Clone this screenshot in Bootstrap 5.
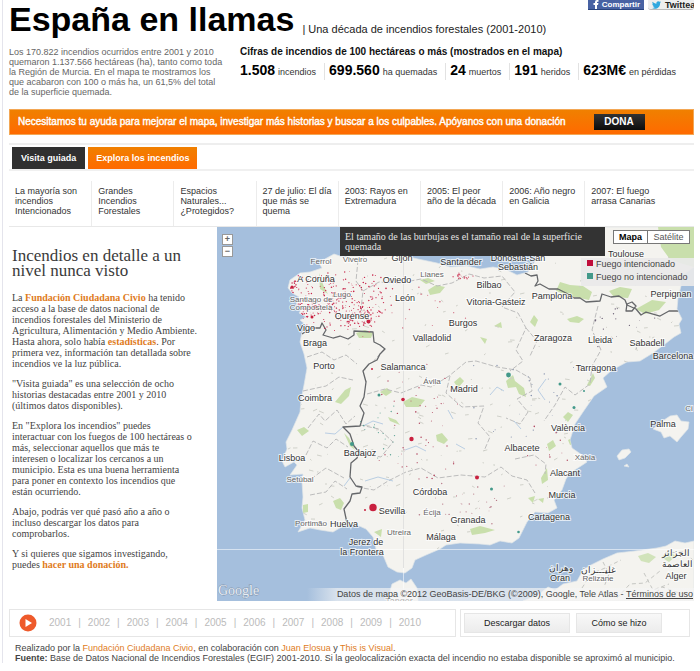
<!DOCTYPE html>
<html lang="es">
<head>
<meta charset="utf-8">
<meta name="viewport" content="width=device-width, initial-scale=1">
<title>España en llamas</title>
<link href="https://cdn.jsdelivr.net/npm/bootstrap@5.3.0/dist/css/bootstrap.min.css" rel="stylesheet">
<style>
body{font-family:"Liberation Sans",Arial,sans-serif;font-size:10px;line-height:10px;color:#444;background:#fff}
a{text-decoration:none;color:#e07b1c}
.page{margin-left:2px;padding:0 6px;border-left:1px solid #e4e4ec}
.site-title{font-size:34px;line-height:38px;font-weight:700;color:#000;margin:0}
.tagline{font-size:11px;line-height:12px;color:#222;padding-bottom:1px}
.masthead{height:40px}
.share{height:10px;overflow:hidden}
.share button{border:0;padding:0 4px;height:10px;font-size:9px;line-height:10px;white-space:nowrap;overflow:hidden}
.share .fb{background:#4862a3;color:#fff;width:56px;font-size:8px;font-weight:700;border-bottom:1px solid #29447e}
.share .tw{background:#eee;color:#222;width:46px;font-weight:700;border-bottom:1px solid #bbb;border-radius:0 0 3px 3px}
.intro{width:231px;color:#666;font-size:9px;padding-top:7px}
.figures h2{font-size:10px;line-height:12px;font-weight:700;color:#111;margin:6px 0 5px}
.figures li{font-size:9px;line-height:15px;padding:0 4px 0 4px;border-left:1px solid #e2e2e2;white-space:nowrap;color:#333}
.figures li:first-child{border:0;padding-left:0}
.figures b{font-size:14px;color:#000;margin-right:3px}
.intro-row{min-height:69px}
.appeal{background:linear-gradient(#f08000,#ff6a00);border:1px solid #f3a755;height:26px;color:#fff;padding-left:8px;gap:28px}
.appeal span{-webkit-text-stroke:.4px #fff}
.appeal a{background:linear-gradient(#333,#0c0c0c);color:#fff;font-weight:700;width:51px;height:16px;line-height:16px;text-align:center}
.tabs{margin-top:8px;border-top:2px solid #eee;border-bottom:2px solid #f0f0f0;padding:2px 0 0 3px;gap:3px}
.tabs button{border:0;height:22px;padding:0 8px;color:#fff;font-size:9px;font-weight:700;background:linear-gradient(#f08000,#ff6a00)}
.tabs .on{background:#303030;padding:0 9px}
.stories{padding-top:10px;border-bottom:1px solid #e8e8e8}
.stories a{flex:0 0 12%;min-width:0;height:45px;padding:5px 0 0 6px;border-left:1px solid #ececec;color:#333;font-size:9px;white-space:nowrap}
.stories a:first-child{border:0}
.stories a:last-child{flex-grow:1}
.story{width:208px;padding:21px 18px 0 3px;font-family:"Liberation Serif",Georgia,serif;font-size:10px;line-height:11px;color:#444}
.story h1{font-size:17px;line-height:15px;margin:0 0 14px;color:#3a3a3a;white-space:nowrap}
.story p{margin:0 0 9px;white-space:nowrap}
.story a{font-weight:700}
.map-panel{min-width:0}
.zoomer{left:5px;top:7px;width:11px}
.zoomer button{display:block;width:11px;height:11px;margin-bottom:1px;padding:0;border:1px solid #999;background:#fff;color:#666;font:700 9px/9px "Liberation Sans",sans-serif}
.hint{left:123px;top:0;width:265px;height:29px;padding:5px;background:#333;color:#e4e4e4;font:10px/10px "Liberation Serif",serif;white-space:nowrap}
.maptype{right:4px;top:3px;border:1px solid #777;background:#fff}
.maptype button{border:0;background:#fff;font-size:9px;line-height:12px;padding:0;width:41px;color:#555}
.maptype button:first-child{width:34px;font-weight:700;color:#000;border-right:1px solid #777}
.legend{right:0;top:31px;width:113px;height:28px;padding:0 0 0 6px;background:rgba(233,233,233,.92);line-height:13px;font-size:9px;white-space:nowrap}
.legend i{display:inline-block;width:6px;height:6px;margin-right:3px;vertical-align:1px}
.legend .arson{background:#c00d3b}
.legend .natural{background:#43998a}
.credit{right:0;bottom:0;height:13px;padding:0 1px 0 30px;background:linear-gradient(90deg,rgba(245,245,245,0),rgba(245,245,245,.65) 30px);font-size:9px;line-height:13px;color:#444;white-space:nowrap}
.credit a{color:#444;text-decoration:underline}
.bottom{margin-top:8px;gap:4px}
.panel{border:1px solid #e6e6e6;height:28px}
.years{gap:7px;padding-left:9px;flex:1;color:#bbb}
.years a{color:#bbb}
.play{border:0;background:none;padding:0;width:18px;height:18px;margin-right:5px}
.play svg{display:block}
.acts{width:230px;padding:0 3px;gap:6px}
.acts button{border:1px solid #e6e6e6;background:linear-gradient(#f8f8f8,#ececec);color:#222;font-size:9px;height:20px;width:86px;padding:0}
.acts button:first-child{width:106px}
.foot{padding:6px 0 0 6px;font-size:9px;white-space:nowrap}
.place{font-family:"Liberation Sans",Arial,sans-serif;font-size:9px;text-anchor:middle;fill:#333;stroke:#fff;stroke-width:2px;stroke-opacity:.7;paint-order:stroke}
.minor{font-size:8px;fill:#666}
</style>
<script src="https://cdn.jsdelivr.net/npm/bootstrap@5.3.0/dist/js/bootstrap.bundle.min.js"></script>
</head>
<body>
<div class="page">
<header>
  <div class="masthead d-flex">
    <div class="d-flex align-items-end flex-grow-1"><div class="site-title align-self-start">España en llamas</div><div class="tagline ms-2 mb-1">| Una década de incendios forestales (2001-2010)</div></div>
    <div class="share d-flex gap-1">
      <button class="fb d-flex align-items-center justify-content-between"><svg width="8" height="9" viewBox="0 0 8 9" aria-hidden="true"><path d="M3 9V5H1.500V3H3V2Q3 0 5 0H6.500V1.700H5.500Q5 1.700 5 2.300V3H6.500L6 5H5V9Z" fill="#fff"/></svg>Compartir</button>
      <button class="tw d-flex align-items-center gap-1"><svg class="flex-shrink-0" width="9" height="8" viewBox="0 0 24 20" aria-hidden="true"><path d="M24 2.400 21.500 5C22 14 15 20 7.500 20 4.800 20 2.200 19.200 0 17.800 2.600 18 5.200 17.400 7.200 15.700 5 15.600 3.200 14.200 2.600 12.300H4.800C2.500 11.800.9 9.800.9 7.400L3.100 8C1 6.500.3 3.700 1.600 1.400 4.100 4.400 7.700 6.300 11.800 6.500 10.900 2.800 13.700 0 16.600 0 18 0 19.300.6 20.200 1.500L23.300.3 21.200 3Z" fill="#31a8df"/></svg>Twittear</button>
    </div>
  </div>
  <div class="intro-row d-flex">
    <div class="intro">Los 170.822 incendios ocurridos entre 2001 y 2010<br>quemaron 1.137.566 hectáreas (ha), tanto como toda<br>la Región de Murcia. En el mapa te mostramos los<br>que acabaron con 100 o más ha, un 61,5% del total<br>de la superficie quemada.</div>
    <div class="figures">
      <h2>Cifras de incendios de 100 hectáreas o más (mostrados en el mapa)</h2>
      <ul class="list-unstyled d-flex mb-0 gap-1"><li><b>1.508</b>incendios</li><li><b>699.560</b>ha quemadas</li><li><b>24</b>muertos</li><li><b>191</b>heridos</li><li><b>623M€</b>en pérdidas</li></ul>
    </div>
  </div>
</header>
<div class="appeal d-flex align-items-center"><span>Necesitamos tu ayuda para mejorar el mapa, investigar más historias y buscar a los culpables. Apóyanos con una donación</span><a href="#">DONA</a></div>
<div class="tabs d-flex"><button class="on">Visita guiada</button><button>Explora los incendios</button></div>
<nav class="stories d-flex">
  <a href="#">La mayoría son<br>incendios<br>Intencionados</a><a href="#">Grandes<br>Incendios<br>Forestales</a><a href="#">Espacios<br>Naturales...<br>¿Protegidos?</a><a href="#">27 de julio: El día<br>que más se<br>quema</a><a href="#">2003: Rayos en<br>Extremadura</a><a href="#">2005: El peor<br>año de la década</a><a href="#">2006: Año negro<br>en Galicia</a><a href="#">2007: El fuego<br>arrasa Canarias</a>
</nav>
<main class="d-flex">
  <article class="story flex-shrink-0">
    <h1>Incendios en detalle a un<br>nivel nunca visto</h1>
    <p>La <a href="#">Fundación Ciudadana Civio</a> ha tenido<br>acceso a la base de datos nacional de<br>incendios forestales del Ministerio de<br>Agricultura, Alimentación y Medio Ambiente.<br>Hasta ahora, solo había <a href="#">estadísticas</a>. Por<br>primera vez, información tan detallada sobre<br>incendios ve la luz pública.</p>
    <p>"Visita guiada" es una selección de ocho<br>historias destacadas entre 2001 y 2010<br>(últimos datos disponibles).</p>
    <p>En "Explora los incendios" puedes<br>interactuar con los fuegos de 100 hectáreas o<br>más, seleccionar aquellos que más te<br>interesen o localizar los cercanos a un<br>municipio. Esta es una buena herramienta<br>para poner en contexto los incendios que<br>están ocurriendo.</p>
    <p>Abajo, podrás ver qué pasó año a año o<br>incluso descargar los datos para<br>comprobarlos.</p>
    <p>Y si quieres que sigamos investigando,<br>puedes <a href="#">hacer una donación.</a></p>
  </article>
  <section class="map-panel position-relative flex-grow-1">
    <svg id="map" class="d-block w-100" viewBox="217 227 477 374" role="img" aria-label="Mapa de incendios">
      <defs><clipPath id="land-clip"><path id="iberia" d="M537 227V258L528 272 517 275 507 270 493 267 480 269 467 266 450 267 437 263 418 259 405 256 390 255 375 256 360 254 343 257 334 254 325 259 319 263 322 268 310 272 300 273 290 280 288 288 292 293 299 297 296 305 303 307 299 313 306 317 300 320 307 326 302 332 300 342 304 354 307 368 304 385 301 400 300 412 292 430 286 442 287 449 282 461 285 467 294 462 297 465 290 475 303 474 302 482 303 497 302 508 305 520 298 532 310 528 320 530 333 532 345 525 357 525 366 529 373 537 376 549 383 555 388 567 397 572 405 573 412 568 415 560 426 555 440 549 446 545 460 543 480 544 490 545 500 541 512 543 519 538 527 522 535 512 548 513 557 508 554 500 562 490 566 479 570 473 581 466 587 462 582 455 572 448 570 440 575 424 583 412 594 396 607 387 603 378 612 370 627 362 640 361 653 353 665 344 674 337 681 333 679 324 682 319 677 309 678 298 681 286 680 277 694 267V227Z"/></clipPath></defs>
      <rect x="217" y="227" width="477" height="374" fill="#a5bfdd"/>
      <g fill="#f4f3ef" stroke="#dfe5e8" stroke-width=".7">
        <use href="#iberia"/>
        <path d="M387 601 392 584 400 580 406 583 411 579 417 588 418 601ZM523 601 538 595 548 587 555 590 563 584 577 581 583 570 591 565 603 559 617 553 635 551 657 548 666 546 675 541 685 543 694 541V601Z"/>
        <path d="M653 429 661 422 670 416 677 415 681 421 689 422 688 429 681 437 677 442 670 436 664 438 661 432ZM617 456 622 450 629 449 631 452 625 458 619 460ZM624 466 627 464 629 467Z"/>
      </g>
      <g clip-path="url(#land-clip)">
        <g fill="#c9dfac">
          <path d="M356 333 365 330 373 333 371 338 359 338ZM335 402 345 390 351 387 349 396 341 404ZM428 290 436 285 445 287 440 293 430 295ZM403 402 412 397 425 400 419 407 406 407ZM380 392 387 388 392 392 386 396ZM506 381 513 375 515 381 524 388 526 397 519 394 516 387 508 388ZM556 291 560 282 570 285 583 286 592 292 589 300 570 296ZM609 291 620 287 632 289 628 298 614 297ZM636 309 652 300 666 302 659 310 645 314ZM658 227H694V267L680 263 669 258 661 247ZM567 319 577 316 584 319 579 323 570 322ZM530 322 534 315 538 320 535 327ZM333 501 340 498 344 503 341 510 336 508ZM297 430 304 427 309 431 302 436ZM344 433 349 438 355 450 350 446ZM303 505 308 504 308 512 303 513ZM547 444 553 440 556 446 549 451ZM541 478 547 468 548 480 542 484ZM528 498 535 496 533 503ZM538 499 544 498 543 503ZM470 529 480 526 495 530 485 533 472 535ZM374 532 382 529 381 537ZM436 435 442 433 448 440 444 444 437 441ZM563 417 568 412 573 415 568 422ZM587 385 593 373 595 378 590 386ZM454 382 460 377 464 381 458 388ZM494 326 501 322 502 328ZM568 440 572 438 575 443 570 445ZM388 417 396 420 400 425 390 421ZM577 227H587V244H570ZM420 280 428 278 435 281 426 284ZM480 337 487 339 485 344ZM319 273 324 287 328 294 320 289Z"/>
        </g>
        <g id="relief" fill="none" stroke="#cccdc5" stroke-width=".9"></g>
        <g fill="none" stroke="#bcbcbc" stroke-width="1" stroke-dasharray="5 2">
          <path d="M358 260 356 281 363 291 361 309 370 326M363 291 379 282 400 283 421 279 437 286 452 283 469 274 484 278 502 276 515 292 502 307 518 313 526 328 516 350 523 361 510 371M385 348 372 363M367 394 385 389 401 393 421 385 431 387 449 376 466 362 476 361 497 367 516 370 530 378 532 391 517 399 528 412 520 424 506 418M450 376 446 393 462 407 484 406 478 423 490 437 484 451M360 425 379 429 393 442 381 457 361 454M357 487 374 490 388 481 406 472 421 468 438 478 461 475 485 477 501 467 512 476 527 480 535 493M515 459 534 455 546 464 545 474M598 306 592 330 601 350 592 366 590 384 575 395 565 387 555 405 544 421M526 328 537 341 530 356M307 357 322 352 334 360 346 355 357 364M303 391 326 386 339 377 353 380M308 428 319 414 325 421 337 410 346 424 355 416M306 455 313 441 327 448 336 439 348 447M311 479 326 468 344 478M310 495 326 492 335 481 347 489"/>
        </g>
        <g fill="none" stroke="#a9c4df" stroke-width=".8"><path d="M293 462 300 458 305 460M343 427 335 434 325 433M363 426 373 421 383 424M405 450 416 446 426 451M350 478 344 486M456 444 465 449M490 395 497 387 504 391M514 421 521 429M448 410 453 419M365 481 378 477 393 481M545 400 538 390 546 379"/></g>
        <g fill="none" stroke="#65676a" stroke-width="1.300" stroke-linejoin="round">
          <path d="M302 334 311 328 320 328 322 323 326 330 323 335 333 338 340 336 348 339 354 335 354 331 373 332 374 342 380 345 385 349 380 354 377 360 369 364 363 371 366 382 364 397 360 406 364 413 360 426 343 427 350 434 354 446 359 452 357 458 351 463 350 477 356 486 362 487 360 493 352 494 350 501 344 509 347 523"/>
          <path d="M525 273 531 276 537 275 538 281 535 286 540 284 549 289 558 289 568 294 574 298 580 298 586 302 600 301 602 294 611 297 619 296 625 300 627 305 636 309 641 315 646 312 660 316 669 311 680 311"/><path d="M627 304 632 302 636 306 632 311 626 311Z"/>
        </g>
      </g>
      <g fill="#c8dfad" opacity=".8"><path d="M638 556 648 553 656 557 649 563 641 561ZM661 557 669 552 676 556 669 562Z"/></g>
      <g fill="none" stroke="#c5c6c2" stroke-dasharray="4 3"><path d="M582 588 591 574 605 568 621 560M603 562 609 574 604 587M617 598 630 584 645 583 660 571M644 573 653 590 669 584M665 553 683 552 693 560M651 597 662 587 688 596"/></g>
      <path d="M403.500 227V601M217 549.500H694" stroke="#fff" stroke-opacity=".55" fill="none"/>
      <path d="M403.500 260V568" stroke="#d5d5d5" stroke-opacity=".7" fill="none"/>
      <g id="fires"></g>
      <g fill="#c9203f"><circle cx="373" cy="507.500" r="3.700"/><circle cx="411.500" cy="439" r="2.200"/><circle cx="477" cy="477.500" r="2"/><circle cx="403" cy="399.500" r="1.800"/><circle cx="368.500" cy="321.500" r="2"/><circle cx="315" cy="307" r="2"/><circle cx="312" cy="317" r="1.500"/><circle cx="292" cy="287" r="1.500"/><circle cx="365" cy="510" r="1"/><circle cx="372" cy="369" r="1"/></g>
      <g fill="#43998a"><circle cx="508.500" cy="375" r="2.400"/><circle cx="560" cy="384" r="1.500"/><circle cx="574" cy="407.500" r="1.500"/><circle cx="584" cy="391" r="1"/><circle cx="352" cy="444" r="2"/><circle cx="491.500" cy="489" r="1.500"/><circle cx="518.500" cy="532" r="1.300"/><circle cx="379" cy="395" r="1.500"/></g>
      <g id="places"></g>
      <text x="218" y="595" font-family="Liberation Serif,serif" font-size="14" fill="#e6edf5" stroke="#8394aa" stroke-width=".8" paint-order="stroke">Google</text>
    </svg>
    <div class="zoomer position-absolute"><button aria-label="Acercar">+</button><button aria-label="Alejar">−</button></div>
    <div class="hint position-absolute">El tamaño de las burbujas es el tamaño real de la superficie<br>quemada</div>
    <div class="legend position-absolute"><i class="arson"></i>Fuego intencionado<br><i class="natural"></i>Fuego no intencionado</div>
    <div class="maptype position-absolute d-flex"><button>Mapa</button><button>Satélite</button></div>
    <div class="credit position-absolute">Datos de mapa ©2012 GeoBasis-DE/BKG (©2009), Google, Tele Atlas - <a href="#">Términos de uso</a></div>
  </section>
</main>
<div class="bottom d-flex pe-1">
  <div class="panel years d-flex align-items-center"><button class="play" aria-label="Reproducir"><svg width="18" height="18" viewBox="0 0 18 18"><circle cx="9" cy="9" r="8.500" fill="#ee5a2b"/><path d="M6.500 5 13 9 6.500 13Z" fill="#fff"/></svg></button>
  <a href="#">2001</a>|<a href="#">2002</a>|<a href="#">2003</a>|<a href="#">2004</a>|<a href="#">2005</a>|<a href="#">2006</a>|<a href="#">2007</a>|<a href="#">2008</a>|<a href="#">2009</a>|<a href="#">2010</a></div>
  <div class="panel acts d-flex align-items-center"><button>Descargar datos</button><button>Cómo se hizo</button></div>
</div>
<footer class="foot">Realizado por la <a href="#">Fundación Ciudadana Civio</a>, en colaboración con <a href="#">Juan Elosua</a> y <a href="#">This is Visual</a>.<br><b>Fuente:</b> Base de Datos Nacional de Incendios Forestales (EGIF) 2001-2010. Si la geolocalización exacta del incendio no estaba disponible se aproximó al municipio.</footer>
</div>
<script>
const NS='http://www.w3.org/2000/svg';
// [name, centre x, baseline y, minor]
const places=[['Ferrol',321,264,1],['Viveiro',355,262,1],['Gijón',402,261],['Santander',461,265],['Donostia-San',518,261],['Sebastián',518,270],['Toulouse',626,257],['A Coruña',316,282],['Oviedo',397,283],['Llanes',432,277,1],['Bilbao',489,288],['Lugo',342,297,1],['León',405,301],['Santiago de',311,302,1],['Compostela',311,310,1],['Vitoria-Gasteiz',496,305],['Pamplona',552,299],['Perpignan',671,297],['Ourense',352,319],['Burgos',463,326],['Vigo',306,331],['Braga',315,346],['Valladolid',432,341],['Zaragoza',553,341],['Lleida',600,343],['Sabadell',647,346],['Barcelona',673,359],['Porto',324,369],['Salamanca',403,370],['Tarragona',596,371],['Ávila',432,384,1],['Madrid',464,392],['Coimbra',315,401],['Badajoz',360,456],['València',568,431],['Palma',663,427],['Albacete',522,451],['Xàbia',585,460,1],['Lisboa',292,461],['Setúbal',300,482,1],['Alacant',565,476],['Murcia',562,498],['Córdoba',430,495],['Sevilla',392,514],['Écija',432,515,1],['Granada',468,523],['Cartagena',549,520],['Portimão',311,526,1],['Huelva',344,527],['Utreira',399,535,1],['Málaga',441,540],['Jerez de',366,545],['la Frontera',362,555],['وهران',561,571],['Oran',560,581],['غليـــزان',598,573],['Relizane',598,581,1],['الجزائر',676,556],['العاصمة',677,567],['Alger',676,579],['Tanger',399,604],['Ci',689,411,1]];
const gp=document.getElementById('places');
for(const [n,x,y,m] of places){const t=document.createElementNS(NS,'text');t.textContent=n;t.setAttribute('x',x);t.setAttribute('y',y);t.setAttribute('class','place'+(m?' minor':''));gp.append(t)}
let seed=41;const rnd=()=>(seed=(seed*16807)%2147483647)/2147483647;
// [centre x, centre y, spread x, spread y, count, colour]
const clusters=[[330,300,38,32,150,'#c8274c'],[305,311,14,12,50,'#c8274c'],[357,317,26,16,75,'#c8274c'],[375,297,20,28,40,'#c8274c'],[463,276,12,5,18,'#d3556f'],[295,285,6,10,18,'#c8274c'],[420,395,55,40,25,'#b44d65'],[420,455,55,45,28,'#b44d65'],[400,310,70,30,30,'#d0667c'],[380,435,25,35,18,'#5ca395'],[520,410,60,65,26,'#8692ae'],[620,325,50,25,18,'#6e6378'],[475,505,60,30,25,'#b87a88'],[550,450,25,30,12,'#b44d65']];
const gf=document.getElementById('fires');
for(const [cx,cy,sx,sy,n,c] of clusters)for(let i=0;i<n;i++){const r=document.createElementNS(NS,'circle');r.setAttribute('cx',(cx+(rnd()+rnd()-1)*sx).toFixed(1));r.setAttribute('cy',(cy+(rnd()+rnd()-1)*sy).toFixed(1));r.setAttribute('r',(.4+rnd()*.4).toFixed(1));r.setAttribute('fill',c);gf.append(r)}
gf.setAttribute('clip-path','url(#land-clip)');
let d='';
for(let i=0;i<260;i++){const x=285+rnd()*395,y=255+rnd()*295;d+=`M${x.toFixed(0)} ${y.toFixed(0)}l${(rnd()*5).toFixed(1)} ${(rnd()*4-2).toFixed(1)}`}
const rp=document.createElementNS(NS,'path');rp.setAttribute('d',d);document.getElementById('relief').append(rp);
</script>
</body>
</html>
